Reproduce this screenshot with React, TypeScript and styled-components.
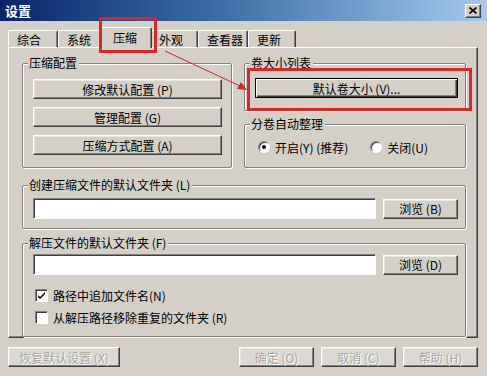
import React from 'react';
import styled, { createGlobalStyle, css } from 'styled-components';

const GlobalStyle = createGlobalStyle`
  html, body {
    margin: 0;
    padding: 0;
    background: #d4d0c8;
  }
  body {
    font-family: "SimSun", "Noto Sans CJK SC", "Liberation Sans", sans-serif;
    font-size: 12px;
    color: #000;
  }
`;

const Window = styled.div`
  position: relative;
  width: 487px;
  height: 376px;
  background: #d4d0c8;
  display: flex;
  flex-direction: column;
  overflow: hidden;
`;

const TitleBar = styled.div`
  height: 21px;
  display: flex;
  align-items: center;
  justify-content: space-between;
  padding: 0 6px 0 5px;
  background: linear-gradient(90deg, #0a246a 0%, #3a6ea5 45%, #a6caf0 100%);
  color: #fff;
  font-weight: bold;
  font-size: 13px;
  box-sizing: border-box;
`;

const CloseBox = styled.div`
  width: 16px;
  height: 14px;
  background: #d4d0c8;
  border: 1px solid;
  border-color: #fff #404040 #404040 #fff;
  box-shadow: inset -1px -1px #808080;
  box-sizing: border-box;
  display: flex;
  align-items: center;
  justify-content: center;
`;

const Body = styled.div`
  padding: 6px 9px 0 8px;
  display: flex;
  flex-direction: column;
`;

const TabStrip = styled.div`
  height: 20px;
  display: flex;
  align-items: flex-end;
  position: relative;
  z-index: 2;
`;

const Tab = styled.div<{ $w: number; $active?: boolean }>`
  width: ${(p) => p.$w}px;
  height: 17px;
  box-sizing: border-box;
  padding: 1px 0 0 8px;
  background: #d4d0c8;
  border-top: 1px solid #fff;
  border-left: 1px solid #fff;
  border-right: 1px solid #404040;
  border-radius: 2px 2px 0 0;
  box-shadow: inset -1px 0 #808080;
  line-height: 15px;
  white-space: nowrap;
  ${(p) =>
    p.$active &&
    css`
      height: 21px;
      margin: 0 -2px -1px -2px;
      padding: 2px 0 0 12px;
      position: relative;
      z-index: 3;
    `}
`;

const Panel = styled.div`
  height: 291px;
  box-sizing: border-box;
  border: 1px solid;
  border-color: #fff #404040 #404040 #fff;
  box-shadow: inset -1px -1px #808080;
  padding: 8px 11px 0 13px;
  display: flex;
  flex-direction: column;
`;

const TopRow = styled.div`
  display: grid;
  grid-template-columns: 210px 222px;
  column-gap: 12px;
`;

const Column = styled.div`
  display: flex;
  flex-direction: column;
  gap: 6px;
`;

const Group = styled.fieldset<{ $pad?: string; $mt?: number }>`
  margin: ${(p) => p.$mt ?? 0}px 0 0 0;
  padding: ${(p) => p.$pad ?? '9px 9px 9px 10px'};
  border: 1px solid #808080;
  box-shadow: inset 1px 1px #fff, 1px 1px #fff;
  border-radius: 2px;
  min-width: 0;
  display: flex;
  flex-direction: column;
  gap: 8px;
`;

const Legend = styled.legend`
  padding: 0 2px 0 1px;
  margin-left: -5px;
  line-height: 14px;
  background: #d4d0c8;
  white-space: nowrap;
`;

const Button = styled.button<{ $default?: boolean; $disabled?: boolean; $w?: number }>`
  height: 20px;
  width: ${(p) => (p.$w ? `${p.$w}px` : '100%')};
  padding: 0;
  font-family: inherit;
  font-size: 12px;
  color: #000;
  background: #d4d0c8;
  border: 1px solid;
  border-color: #fff #404040 #404040 #fff;
  box-shadow: inset -1px -1px #808080, inset 1px 1px #e8e6e1;
  box-sizing: border-box;
  white-space: pre;
  ${(p) =>
    p.$default &&
    css`
      border: 1px solid #000;
      box-shadow: inset 1px 1px #fff, inset -1px -1px #404040, inset -2px -2px #808080;
    `}
  ${(p) =>
    p.$disabled &&
    css`
      color: #a8a5a0;
      text-shadow: 1px 1px #fff;
      background: #dcd9d3;
    `}
`;

const PathRow = styled.div`
  display: flex;
  gap: 7px;
  align-items: center;
`;

const TextBox = styled.div`
  flex: 1;
  height: 21px;
  background: #fff;
  border: 1px solid;
  border-color: #808080 #fff #fff #808080;
  box-shadow: inset 1px 1px #404040;
  box-sizing: border-box;
`;

const OptionRow = styled.div`
  display: flex;
  align-items: center;
  height: 14px;
  gap: 22px;
  padding-left: 3px;
`;

const Option = styled.label`
  display: flex;
  align-items: center;
  gap: 5px;
  white-space: pre;
`;

const RadioDot = styled.span<{ $on?: boolean }>`
  width: 12px;
  height: 12px;
  border-radius: 50%;
  background: #fff;
  box-sizing: border-box;
  border: 1px solid;
  border-color: #808080 #fff #fff #808080;
  box-shadow: inset 1px 1px #404040;
  display: flex;
  align-items: center;
  justify-content: center;
  &::after {
    content: '';
    width: 4px;
    height: 4px;
    border-radius: 50%;
    background: ${(p) => (p.$on ? '#000' : 'transparent')};
  }
`;

const CheckBox = styled.span`
  width: 13px;
  height: 13px;
  background: #fff;
  box-sizing: border-box;
  border: 1px solid;
  border-color: #808080 #fff #fff #808080;
  box-shadow: inset 1px 1px #404040;
  display: flex;
  align-items: center;
  justify-content: center;
`;

const Checks = styled.div`
  display: flex;
  flex-direction: column;
  gap: 5px;
  padding-left: 2px;
  margin-top: 4px;
`;

const Footer = styled.div`
  margin-top: 9px;
  display: flex;
  gap: 7px;
  background: #d4d0c8;
`;

const Spacer = styled.div`
  flex: 1;
`;

const Overlay = styled.svg`
  position: absolute;
  left: 0;
  top: 0;
  pointer-events: none;
  z-index: 10;
`;

const Tick = () => (
  <svg width="9" height="9" viewBox="0 0 9 9">
    <path d="M1 4 L3 6 L8 1 L8 3 L3 8 L1 6 Z" fill="#000" />
  </svg>
);

export default function App() {
  return (
    <>
      <GlobalStyle />
      <Window>
        <TitleBar>
          <span>设置</span>
          <CloseBox>
            <svg width="8" height="7" viewBox="0 0 8 7">
              <path d="M0.5 0.5 L7.5 6.5 M7.5 0.5 L0.5 6.5" stroke="#000" strokeWidth="1.6" />
            </svg>
          </CloseBox>
        </TitleBar>
        <Body>
          <TabStrip>
            <Tab $w={50}>综合</Tab>
            <Tab $w={44}>系统</Tab>
            <Tab $w={52} $active>压缩</Tab>
            <Tab $w={48}>外观</Tab>
            <Tab $w={50}>查看器</Tab>
            <Tab $w={48}>更新</Tab>
          </TabStrip>
          <Panel>
            <TopRow>
              <Group $pad="9px 9px 8px 10px">
                <Legend>压缩配置</Legend>
                <Button>修改默认配置 (P)</Button>
                <Button>管理配置 (G)</Button>
                <Button>压缩方式配置 (A)</Button>
              </Group>
              <Column>
                <Group $pad="8px 7px 12px 10px">
                  <Legend>卷大小列表</Legend>
                  <Button $default>默认卷大小 (V)...</Button>
                </Group>
                <Group $pad="9px 7px 13px 10px">
                  <Legend>分卷自动整理</Legend>
                  <OptionRow>
                    <Option>
                      <RadioDot $on />
                      开启(Y) (推荐)
                    </Option>
                    <Option>
                      <RadioDot />
                      关闭(U)
                    </Option>
                  </OptionRow>
                </Group>
              </Column>
            </TopRow>
            <Group $mt={10} $pad="6px 7px 9px 10px">
              <Legend>创建压缩文件的默认文件夹 (L)</Legend>
              <PathRow>
                <TextBox />
                <Button $w={75}>浏览 (B)</Button>
              </PathRow>
            </Group>
            <Group $mt={7} $pad="4px 7px 10px 10px">
              <Legend>解压文件的默认文件夹 (F)</Legend>
              <PathRow>
                <TextBox />
                <Button $w={75}>浏览 (D)</Button>
              </PathRow>
              <Checks>
                <Option>
                  <CheckBox>
                    <Tick />
                  </CheckBox>
                  路径中追加文件名(N)
                </Option>
                <Option>
                  <CheckBox />
                  从解压路径移除重复的文件夹 (R)
                </Option>
              </Checks>
            </Group>
          </Panel>
          <Footer>
            <Button $w={112} $disabled>恢复默认设置 (X)</Button>
            <Spacer />
            <Button $w={75} $disabled>确定 (O)</Button>
            <Button $w={75} $disabled>取消 (C)</Button>
            <Button $w={75} $disabled>帮助 (H)</Button>
          </Footer>
        </Body>
        <Overlay width="487" height="376" viewBox="0 0 487 376">
          <rect x="100.5" y="18.5" width="55" height="33" fill="none" stroke="#d02a2e" strokeWidth="3" />
          <rect x="248.5" y="69.5" width="222" height="40" fill="none" stroke="#d02a2e" strokeWidth="3" />
          <line x1="165" y1="51" x2="240" y2="86" stroke="#c8282c" strokeWidth="1" />
          <path d="M247 90 L237 89 L241 82 Z" fill="#d02a2e" />
        </Overlay>
      </Window>
    </>
  );
}
